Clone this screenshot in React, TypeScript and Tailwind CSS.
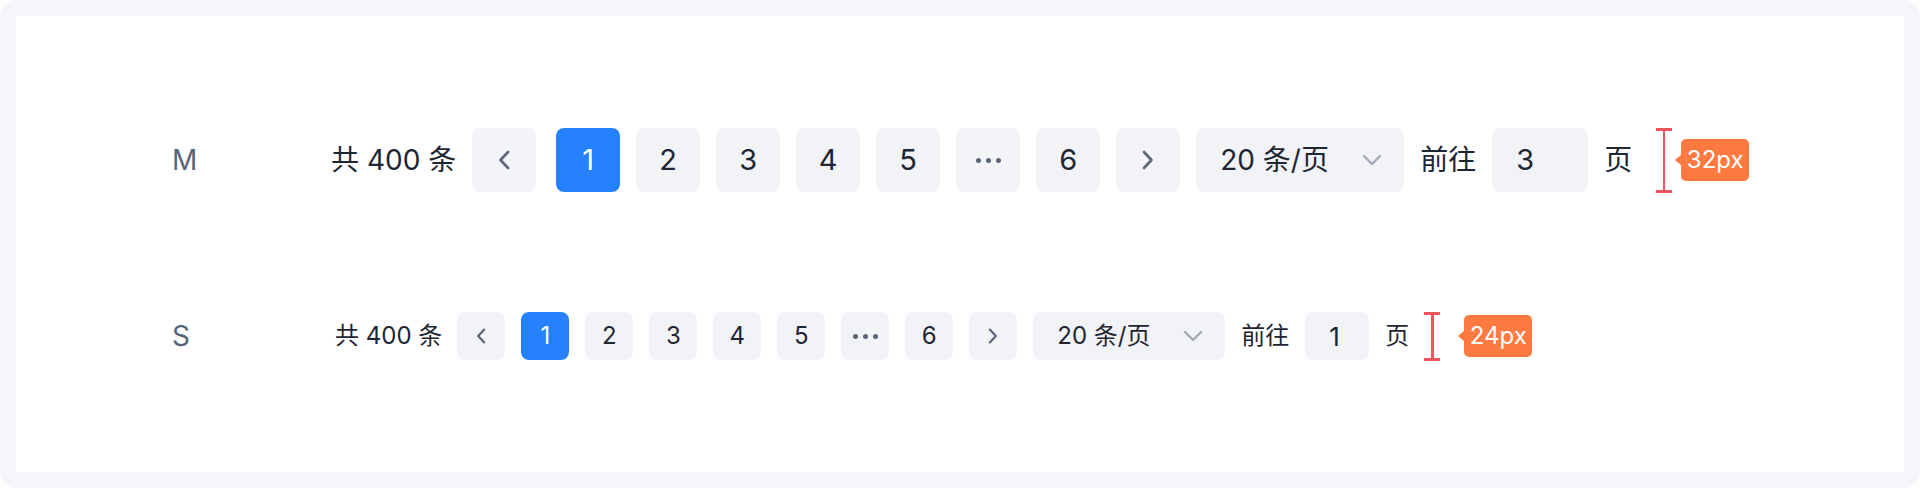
import { ReactNode } from "react";

const font = { fontFamily: 'Inter, "Noto Sans CJK SC", sans-serif' };

type Size = "M" | "S";

const Chevron = ({ dir, size }: { dir: "left" | "right"; size: Size }) => {
  const w = size === "M" ? 12 : 10;
  const h = size === "M" ? 20 : 16;
  return (
    <svg width={w} height={h} viewBox="0 0 12 20" fill="none">
      <path
        d={dir === "left" ? "M10 2 L2.5 10 L10 18" : "M2 2 L9.5 10 L2 18"}
        stroke="#5b6678"
        strokeWidth={size === "M" ? 2.6 : 2.8}
        strokeLinecap="round"
        strokeLinejoin="round"
      />
    </svg>
  );
};

const Down = () => (
  <svg width="20" height="12" viewBox="0 0 20 12" fill="none">
    <path
      d="M2 2 L10 10 L18 2"
      stroke="#a1a8b3"
      strokeWidth="2.4"
      strokeLinecap="round"
      strokeLinejoin="round"
    />
  </svg>
);

const Dots = () => (
  <div className="flex items-center gap-[5px]">
    <span className="h-[5px] w-[5px] rounded-full bg-[#5b6678]" />
    <span className="h-[5px] w-[5px] rounded-full bg-[#5b6678]" />
    <span className="h-[5px] w-[5px] rounded-full bg-[#5b6678]" />
  </div>
);

const Btn = ({
  size,
  active,
  children,
}: {
  size: Size;
  active?: boolean;
  children: ReactNode;
}) => (
  <div
    className={`flex shrink-0 items-center justify-center rounded-lg ${
      size === "M" ? "h-16 w-16 text-[29px]" : "h-12 w-12 text-[24px]"
    } ${active ? "bg-[#2681fc] text-white" : "bg-[#f2f3f7] text-[#1f2633]"}`}
  >
    {children}
  </div>
);

const Measure = ({ size }: { size: Size }) => (
  <div
    className={`flex shrink-0 flex-col items-center ${
      size === "M" ? "h-[65px]" : "h-[49px]"
    }`}
  >
    <div className="h-[3px] w-4 bg-[#f4545c]" />
    <div className="w-[2.5px] flex-1 bg-[#f4545c]" />
    <div className="h-[3px] w-4 bg-[#f4545c]" />
  </div>
);

const Badge = ({ label }: { label: string }) => (
  <div className="relative flex h-[42px] w-[68px] shrink-0 items-center justify-center rounded-[5px] bg-[#ff7a41] text-[24px] text-white">
    <span className="absolute left-[-6px] top-1/2 h-0 w-0 -translate-y-1/2 border-y-[6px] border-r-[7px] border-y-transparent border-r-[#ff7a41]" />
    {label}
  </div>
);

const Pager = ({ size, jump }: { size: Size; jump: string }) => {
  const m = size === "M";
  return (
    <div className={`flex items-center ${m ? "text-[28px]" : "text-[24px]"} text-[#1f2633]`}>
      <span className={m ? "mr-4" : "mr-[15px]"}>共 400 条</span>
      <div className={m ? "mr-5" : "mr-4"}>
        <Btn size={size}>
          <Chevron dir="left" size={size} />
        </Btn>
      </div>
      <div className="flex items-center gap-4">
        <Btn size={size} active>
          1
        </Btn>
        <Btn size={size}>2</Btn>
        <Btn size={size}>3</Btn>
        <Btn size={size}>4</Btn>
        <Btn size={size}>5</Btn>
        <Btn size={size}>
          <Dots />
        </Btn>
        <Btn size={size}>6</Btn>
        <Btn size={size}>
          <Chevron dir="right" size={size} />
        </Btn>
        <div
          className={`flex shrink-0 items-center justify-between rounded-lg bg-[#f2f3f7] pl-6 pr-[22px] ${
            m ? "h-16 w-[208px]" : "h-12 w-[192px]"
          }`}
        >
          <span>20 条/页</span>
          <Down />
        </div>
        <span>前往</span>
        <div
          className={`flex shrink-0 items-center rounded-lg bg-[#f2f3f7] pl-6 ${
            m ? "h-16 w-24 text-[29px]" : "h-12 w-16 text-[26px]"
          }`}
        >
          {jump}
        </div>
        <span>页</span>
      </div>
      <div className={m ? "ml-6 mr-[9px]" : "ml-[15px] mr-6"}>
        <Measure size={size} />
      </div>
      <Badge label={m ? "32px" : "24px"} />
    </div>
  );
};

export default function App() {
  return (
    <div className="h-[488px] w-[1920px] bg-white" style={font}>
      <div className="h-full w-full rounded-2xl bg-[#f5f6fa] p-4">
        <div className="flex h-full w-full flex-col gap-[120px] bg-white pl-[156px] pt-[112px]">
          <div className="flex h-16 items-center">
            <span className="w-[159px] text-[28px] text-[#5a6478]">M</span>
            <Pager size="M" jump="3" />
          </div>
          <div className="flex h-12 items-center">
            <span className="w-[163px] text-[28px] text-[#5a6478]">S</span>
            <Pager size="S" jump="1" />
          </div>
        </div>
      </div>
    </div>
  );
}
